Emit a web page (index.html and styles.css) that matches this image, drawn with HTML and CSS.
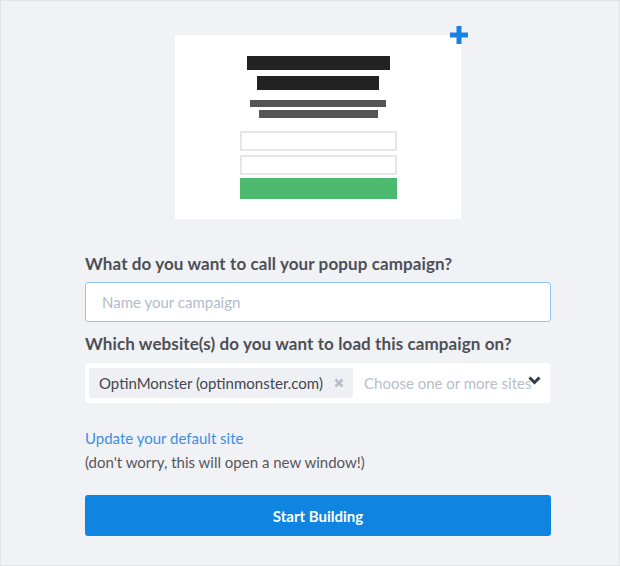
FILE: index.html
```html
<!DOCTYPE html>
<html>
<head>
<meta charset="utf-8">
<link rel="stylesheet" href="styles.css">
</head>
<body>
<div class="page">
  <div class="column">
    <div class="preview-wrap">
      <div class="preview">
        <div class="bar bar-1"></div>
        <div class="bar bar-2"></div>
        <div class="bar bar-3"></div>
        <div class="bar bar-4"></div>
        <div class="mini-input mini-input-1"></div>
        <div class="mini-input mini-input-2"></div>
        <div class="mini-button"></div>
        <svg class="plus" width="20" height="20" viewBox="0 0 20 20"><path d="M10 1v18M1 10h18" stroke="#1a82e2" stroke-width="5" stroke-linecap="butt" fill="none"/></svg>
      </div>
    </div>

    <label class="label label-name">What do you want to call your popup campaign?</label>
    <div class="text-input"><span class="placeholder">Name your campaign</span></div>

    <label class="label label-sites">Which website(s) do you want to load this campaign on?</label>
    <div class="select">
      <div class="tag">
        <span class="tag-text">OptinMonster (optinmonster.com)</span>
        <svg class="tag-x" width="10" height="10" viewBox="0 0 10 10"><path d="M1.5 1.5l7 7M8.5 1.5l-7 7" stroke="#b7bec8" stroke-width="2.6" fill="none"/></svg>
      </div>
      <div class="select-placeholder">Choose one or more sites</div>
      <svg class="chevron" width="13" height="10" viewBox="0 0 13 10"><path d="M1.5 2.5l5 5 5-5" stroke="#2f3849" stroke-width="3" fill="none"/></svg>
    </div>

    <a class="link">Update your default site</a>
    <p class="note">(don't worry, this will open a new window!)</p>

    <div class="button">Start Building</div>
  </div>
</div>
</body>
</html>
```
FILE: styles.css
```css
html, body {
  margin: 0;
  padding: 0;
}
body {
  font-family: Lato, "Open Sans", sans-serif;
  background: #f1f2f6;
}
.page {
  width: 620px;
  height: 566px;
  box-sizing: border-box;
  border: 1px solid #e3e4e7;
  background: #f1f2f6;
  padding: 34px 0 0 84px;
}
.column {
  width: 466px;
  display: flex;
  flex-direction: column;
}
.preview-wrap {
  display: flex;
  justify-content: center;
}
.preview {
  position: relative;
  width: 286px;
  height: 184px;
  box-sizing: border-box;
  background: #fff;
  padding-top: 21px;
  display: flex;
  flex-direction: column;
  align-items: center;
}
.bar {
  background: #222;
}
.bar-1 { width: 143px; height: 14px; }
.bar-2 { width: 122px; height: 14px; margin-top: 6px; }
.bar-3 { width: 136px; height: 7px; margin-top: 10px; background: #555; }
.bar-4 { width: 119px; height: 8px; margin-top: 3px; background: #555; }
.mini-input {
  width: 157px;
  height: 20px;
  box-sizing: border-box;
  border: 2px solid #e6e6e6;
  background: #fff;
}
.mini-input-1 { margin-top: 13px; }
.mini-input-2 { margin-top: 4px; }
.mini-button {
  width: 157px;
  height: 21px;
  margin-top: 3px;
  background: #4cb96f;
}
.plus {
  position: absolute;
  left: 274px;
  top: -10px;
}
.label {
  font-size: 17px;
  font-weight: 700;
  letter-spacing: 0.1px;
  color: #4e4f55;
  line-height: 20px;
}
.label-name { margin-top: 35px; }
.label-sites { margin-top: 12px; }
.text-input {
  margin-top: 8px;
  height: 40px;
  box-sizing: border-box;
  border: 1px solid #8fc4f3;
  border-radius: 3px;
  background: #fff;
  display: flex;
  align-items: center;
  padding-left: 16px;
}
.placeholder {
  font-size: 15px;
  color: #b4bbc6;
}
.select {
  margin-top: 9px;
  height: 40px;
  width: 465px;
  box-sizing: border-box;
  background: #fff;
  border-radius: 3px;
  display: flex;
  align-items: center;
  padding-left: 4px;
  position: relative;
  overflow: hidden;
}
.tag {
  height: 30px;
  width: 264px;
  flex: none;
  box-sizing: border-box;
  background: #eef0f4;
  border-radius: 2px;
  display: flex;
  align-items: center;
  padding-left: 10px;
}
.tag-text {
  font-size: 15px;
  color: #444650;
  flex: 1;
}
.tag-x {
  margin-right: 9px;
}
.select-placeholder {
  margin-left: 11px;
  font-size: 15px;
  color: #b7bdc8;
  white-space: nowrap;
}
.chevron {
  position: absolute;
  left: 443px;
  top: 12px;
}
.link {
  margin-top: 25px;
  font-size: 15px;
  color: #3b8fe4;
  line-height: 20px;
}
.note {
  margin: 4px 0 0;
  font-size: 15px;
  color: #55565c;
  line-height: 20px;
}
.button {
  margin-top: 23px;
  height: 41px;
  border-radius: 3px;
  background: #0f84e0;
  color: #fff;
  font-size: 15px;
  font-weight: 700;
  display: flex;
  align-items: center;
  justify-content: center;
}
```
